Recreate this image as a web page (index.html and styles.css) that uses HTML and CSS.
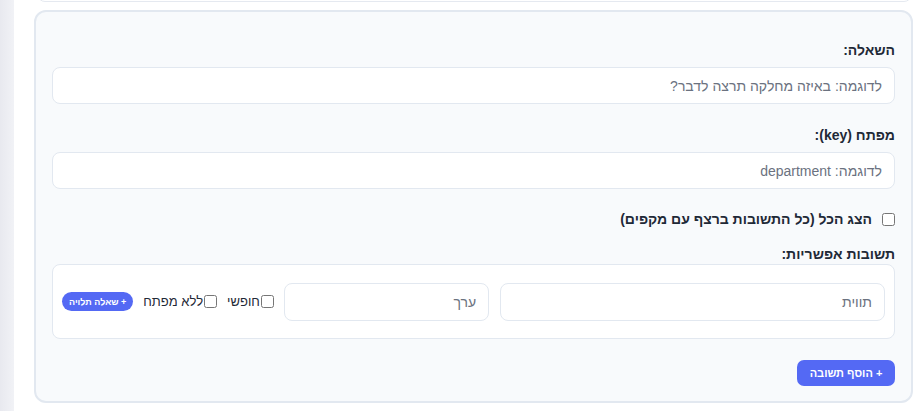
FILE: index.html
```html
<!DOCTYPE html>
<html lang="he">
<head>
<meta charset="utf-8">
<title>שאלה</title>
<link rel="stylesheet" href="styles.css">
</head>
<body>
<div class="app">
  <aside class="rail"></aside>
  <main class="main">
    <div class="prev-card"></div>
    <section class="card" dir="rtl">
      <label class="field-label label-q">השאלה:</label>
      <input class="text-input" type="text" placeholder="לדוגמה: באיזה מחלקה תרצה לדבר?">

      <label class="field-label label-key">מפתח (key):</label>
      <input class="text-input" type="text" placeholder="לדוגמה: department">

      <label class="show-all">
        <input type="checkbox" class="check">
        <span>הצג הכל (כל התשובות ברצף עם מקפים)</span>
      </label>

      <div class="field-label label-answers">תשובות אפשריות:</div>
      <div class="answers">
        <div class="answer-row">
          <input class="text-input ans-label" type="text" placeholder="תווית">
          <input class="text-input ans-value" type="text" placeholder="ערך">
          <label class="inline-check"><input type="checkbox" class="check"><span>חופשי</span></label>
          <label class="inline-check"><input type="checkbox" class="check"><span>ללא מפתח</span></label>
          <button class="pill-btn" type="button">+ שאלה תלויה</button>
        </div>
      </div>

      <div class="actions">
        <button class="add-btn" type="button">+ הוסף תשובה</button>
      </div>
    </section>
  </main>
</div>
</body>
</html>
```

FILE: styles.css
```css
* { box-sizing: border-box; }

html, body {
  margin: 0;
  height: 411px;
  overflow: hidden;
  background: #ffffff;
  font-family: "Liberation Sans", Arial, sans-serif;
  color: #1f2937;
}

.app {
  display: flex;
  height: 411px;
  width: 924px;
}

.rail {
  width: 14px;
  flex: none;
  background: linear-gradient(to right, #e8e9ef, #f1f2f6);
}

.main {
  flex: 1;
  min-width: 0;
  padding: 0 11px 0 20px;
}

.prev-card {
  height: 30px;
  margin: -28px 1px 0 3px;
  background: #ffffff;
  border: 1px solid #e5e9f0;
  border-radius: 8px;
}

.card {
  margin-top: 8px;
  height: 393px;
  background: #f8fafc;
  border: 2px solid #e2e8f0;
  border-radius: 12px;
  padding: 28px 16px 15px;
  display: flex;
  flex-direction: column;
  align-items: stretch;
  min-width: 0;
}

.field-label {
  display: block;
  font-size: 14px;
  line-height: 20px;
  font-weight: 700;
  color: #1f2937;
}

.label-q { margin-bottom: 7px; }
.label-key { margin-top: 21px; margin-bottom: 7px; }
.label-answers { margin-top: 15px; }

.text-input {
  display: block;
  height: 37px;
  width: 100%;
  min-width: 0;
  border: 1px solid #e2e8f0;
  border-radius: 8px;
  background: #ffffff;
  padding: 0 12px;
  font-family: "Liberation Sans", Arial, sans-serif;
  font-size: 14px;
  color: #1f2937;
  outline: none;
}

.text-input::placeholder { color: #6b7280; }

.show-all {
  display: flex;
  align-items: center;
  gap: 10px;
  margin-top: 20px;
  height: 20px;
  font-size: 14px;
  font-weight: 700;
  color: #1f2937;
}

.check {
  width: 13px;
  height: 13px;
  margin: 0;
  flex: none;
}

.answers {
  background: #ffffff;
  border: 1px solid #e2e8f0;
  border-radius: 8px;
  height: 75px;
  padding: 0 9px;
  display: flex;
  align-items: center;
  min-width: 0;
}

.answer-row {
  display: flex;
  align-items: center;
  gap: 10px;
  width: 100%;
  min-width: 0;
}

.ans-label { width: auto; flex: 1 1 386px; height: 38px; }
.ans-value { width: auto; flex: 0 1 206px; height: 38px; margin-right: 1px; }

.inline-check {
  display: flex;
  align-items: center;
  gap: 1px;
  font-size: 13px;
  color: #1f2937;
  white-space: nowrap;
  flex: none;
}

.pill-btn {
  height: 19px;
  padding: 0 7px;
  border: none;
  border-radius: 10px;
  background: #5469f4;
  color: #ffffff;
  font-family: "Liberation Sans", Arial, sans-serif;
  font-size: 9px;
  font-weight: 700;
  white-space: nowrap;
  flex: none;
}

.actions {
  margin-top: 21px;
  display: flex;
}

.add-btn {
  height: 26px;
  width: 98px;
  border: none;
  border-radius: 7px;
  background: #5469f4;
  color: #ffffff;
  font-family: "Liberation Sans", Arial, sans-serif;
  font-size: 11px;
  font-weight: 700;
}
```
